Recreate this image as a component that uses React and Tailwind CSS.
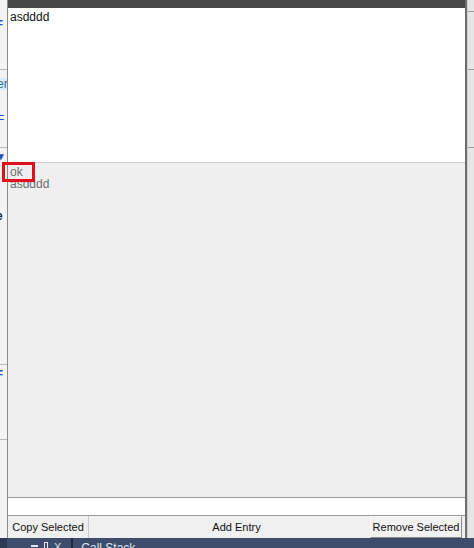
import React from "react";

export default function App() {
  const font = { fontFamily: '"Liberation Sans", Arial, sans-serif' };
  return (
    <div className="relative w-[474px] h-[548px] overflow-hidden flex flex-col bg-[#f0f0f0] text-[11px] leading-none" style={font}>
      <div className="flex flex-1 min-h-0">
        {/* left strip (background app) */}
        <div className="w-[7px] flex flex-col bg-[#f3f3f3] overflow-hidden relative">
          <div className="h-[70px] border-b border-[#b8b8b8] pt-[17px]">
            <div className="text-[#2a52be] text-[12px] leading-none -ml-[4px] font-bold">=</div>
          </div>
          <div className="h-[78px] border-b border-[#b8b8b8] pt-[8px]">
            <div className="bg-[#dbeaf7] text-[#2b6f9a] text-[12px] leading-none -ml-[3px] w-[10px]">er</div>
            <div className="text-[#2a52be] text-[12px] leading-none -ml-[3px] mt-[24px]">F</div>
          </div>
          <div className="h-[217px] border-b border-[#b8b8b8] pt-[3px]">
            <div className="text-[#2a52be] text-[11px] leading-none -ml-[2px] font-bold">▾</div>
            <div className="text-[#222] text-[12px] leading-none -ml-[4px] mt-[48px] font-bold">e</div>
          </div>
          <div className="h-[75px] border-b border-[#b8b8b8] pt-[2px]">
            <div className="text-[#2a52be] text-[12px] leading-none -ml-[4px] font-bold">=</div>
          </div>
          <div className="flex-1" />
        </div>
        {/* window */}
        <div className="flex-1 flex flex-col border-l border-[#8a8a8a] border-r-2 border-r-[#6e6e6e] bg-[#f0f0f0]">
          <div className="h-[8px] bg-[#474747]" />
          <div className="h-[155px] bg-white border-b border-[#cfcfcf] px-[2px] pt-[3px] text-[#111] text-[12px]">asdddd</div>
          <div className="flex-1 bg-[#efefef] pt-[3px] pl-[2px] text-[#6d6d6d] text-[12px] flex flex-col">
            <div className="h-[12px] leading-[12px]">ok</div>
            <div className="h-[12px] leading-[12px]">asdddd</div>
          </div>
          <div className="h-[19px] bg-white border-t border-[#9a9a9a] border-b border-b-[#9a9a9a]" />
          <div className="h-[22px] flex bg-[#f0f0f0] text-[#111] whitespace-nowrap">
            <div className="w-[81px] border-r border-[#c8c8c8] flex items-center justify-center">Copy Selected</div>
            <div className="flex-1 flex items-center justify-center pl-[14px]">Add Entry</div>
            <div className="w-[92px] mr-[3px] flex items-center justify-center border border-t-[#fafafa] border-l-[#fafafa] border-r-[#8a8a8a] border-b-[#8a8a8a] bg-[#f2f2f2]">Remove Selected</div>
          </div>
        </div>
        {/* right strip */}
        <div className="w-[7px] flex flex-col bg-[#e6e6e6] border-l border-[#d0d0d0]">
          <div className="h-[12px] border-b border-[#9a9a9a]" />
          <div className="h-[58px] border-b border-[#9a9a9a]" />
          <div className="h-[78px] border-b border-[#9a9a9a]" />
          <div className="flex-1" />
        </div>
      </div>
      {/* bottom band */}
      <div className="h-[10px] bg-[#3d4d6b] flex items-start overflow-hidden text-[#dfe4ee]">
        <div className="w-[7px] bg-[#2d3a55] h-full" />
        <div className="ml-[24px] flex items-start gap-[6px] mt-[4px] text-[11px] leading-none">
          <span className="block w-[7px] h-[2px] bg-[#dfe4ee] mt-[3px]" />
          <span className="block w-[4px] h-[8px] border border-[#dfe4ee]" />
          <span>X</span>
        </div>
        <div className="ml-[10px] w-[2px] h-full bg-[#1f2a40]" />
        <div className="ml-[8px] mt-[4px] text-[12px] leading-none">Call Stack</div>
      </div>
      {/* red highlight over the first entry */}
      <div className="absolute left-[2px] top-[162px] w-[33px] h-[20px] border-[3px] border-[#e3101c] pointer-events-none" />
    </div>
  );
}
